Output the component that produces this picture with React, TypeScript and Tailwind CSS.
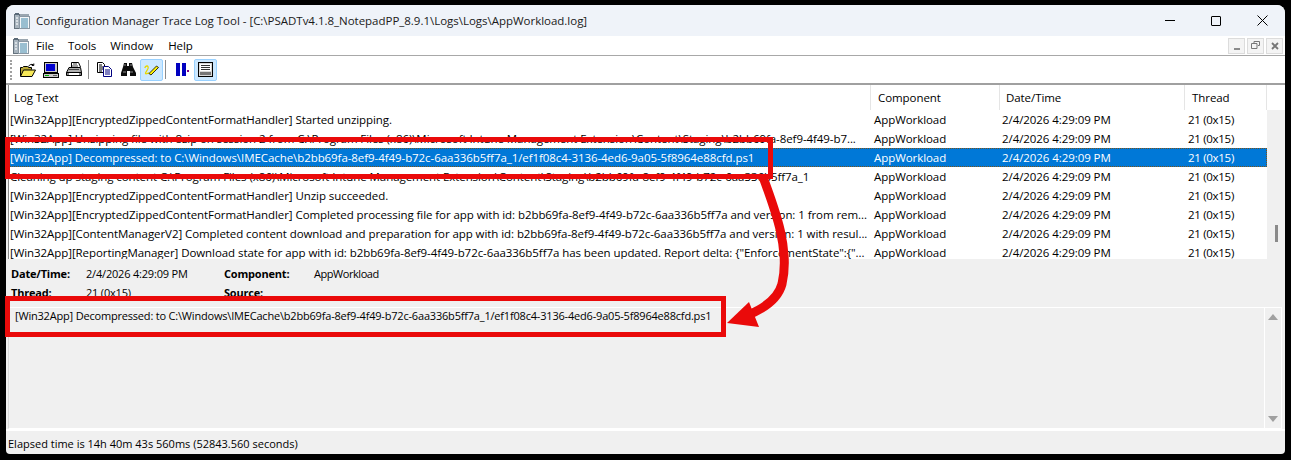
const rows = [
  "[Win32App][EncryptedZippedContentFormatHandler] Started unzipping.",
  "[Win32App] Unzipping file with 8zip on session 2 from C:\\Program Files (x86)\\Microsoft Intune Management Extension\\Content\\Staging\\b2bb69fa-8ef9-4f49-b7...",
  "[Win32App] Decompressed: to C:\\Windows\\IMECache\\b2bb69fa-8ef9-4f49-b72c-6aa336b5ff7a_1/ef1f08c4-3136-4ed6-9a05-5f8964e88cfd.ps1",
  "Cleaning up staging content C:\\Program Files (x86)\\Microsoft Intune Management Extension\\Content\\Staging\\b2bb69fa-8ef9-4f49-b72c-6aa336b5ff7a_1",
  "[Win32App][EncryptedZippedContentFormatHandler] Unzip succeeded.",
  "[Win32App][EncryptedZippedContentFormatHandler] Completed processing file for app with id: b2bb69fa-8ef9-4f49-b72c-6aa336b5ff7a and version: 1 from rem...",
  "[Win32App][ContentManagerV2] Completed content download and preparation for app with id: b2bb69fa-8ef9-4f49-b72c-6aa336b5ff7a and version: 1 with resul...",
  "[Win32App][ReportingManager] Download state for app with id: b2bb69fa-8ef9-4f49-b72c-6aa336b5ff7a has been updated. Report delta: {\"EnforcementState\":{\"...",
];

function AppIcon() {
  return (
    <svg width="16" height="16" viewBox="0 0 16 16">
      <rect x="0.500" y="1.500" width="5" height="14" fill="#a8b4be" stroke="#66737e" />
      <rect x="1" y="0" width="4" height="2" fill="#5a6a78" />
      <rect x="5.500" y="3.500" width="10" height="12" fill="#f4f7f9" stroke="#8a98a4" />
      <rect x="6" y="1" width="9" height="2" fill="#9aa6b0" />
      <path d="M7 6h7M7 8h7M7 10h7M7 12h7M7 14h7" stroke="#3f86a8" />
      <path d="M2 5h2M2 8h2M2 11h2" stroke="#e8edf1" strokeWidth="1.500" />
    </svg>
  );
}

function ToolIcon({ name }: { name: string }) {
  if (name === "open")
    return (
      <svg width="16" height="14" viewBox="0 0 16 14">
        <path d="M.5 13V4.500h2l1-1h4l1 1h3v2" fill="#b8a838" stroke="#000" />
        <path d="M.5 13.500 3.500 7h12l-3.500 6.500z" fill="#f6e858" stroke="#000" />
        <path d="M8.500 3.500C9.500 1.500 11.500.800 13.500 1.800M13.800.500v2h-2" fill="none" stroke="#000" />
      </svg>
    );
  if (name === "computer")
    return (
      <svg width="16" height="16" viewBox="0 0 16 16">
        <rect x="1.500" y="0.500" width="13" height="10" fill="#c8c8c8" stroke="#000" />
        <rect x="3" y="2" width="9" height="7" fill="#0000d0" />
        <rect x="0.500" y="11.500" width="15" height="4" fill="#c8c8c8" stroke="#000" />
        <rect x="2" y="13" width="4" height="1" fill="#00b000" />
        <rect x="10" y="13" width="4" height="1" fill="#606060" />
      </svg>
    );
  if (name === "print")
    return (
      <svg width="16" height="15" viewBox="0 0 16 15">
        <path d="M5.500 5V.500h7l2 4.500" fill="#fff" stroke="#000" />
        <path d="M3 5.500h11.500l1 5h-15z" fill="#b0b0b0" stroke="#000" />
        <path d="M.5 10.500h15v3h-15z" fill="#808080" stroke="#000" />
        <rect x="3" y="11" width="10" height="2" fill="#fff" />
        <path d="M7 2h4M6 4h6M3 7.500h10" stroke="#444" />
      </svg>
    );
  if (name === "copy")
    return (
      <svg width="15" height="15" viewBox="0 0 15 15">
        <path d="M.5.500h5l2 2v8h-7z" fill="#fff" stroke="#000" />
        <path d="M2 3h3M2 5h4M2 7h4M2 9h3" stroke="#000" />
        <path d="M6.500 4.500h5l3 3v7h-8z" fill="#fff" stroke="#000080" />
        <path d="M8 8h5M8 10h5M8 12h5" stroke="#000080" />
      </svg>
    );
  if (name === "find")
    return (
      <svg width="16" height="15" viewBox="0 0 16 15">
        <path d="M4 1h3v3h2V1h3l1 4 3 6v3h-6V9H7v5H1v-3l2-6z" fill="#0c0c0c" />
        <path d="M3 10h3M10 10h3" stroke="#8a8a8a" />
        <path d="M5 2v2M11 2v2" stroke="#8a8a8a" />
      </svg>
    );
  if (name === "highlight")
    return (
      <svg width="15" height="14" viewBox="0 0 15 14">
        <path d="M.8 5C1.500 2 5 2.500 4 5.500 3 8 1 9.500 1.500 10.500 2 11.500 4 10 5 10" fill="none" stroke="#e8d800" strokeWidth="1.300" />
        <path d="M5 10.500 12.500 3l2 1.500-7.500 7.500z" fill="#fff000" stroke="#000" strokeWidth="0.800" />
      </svg>
    );
  if (name === "pause")
    return (
      <svg width="14" height="13" viewBox="0 0 14 13">
        <rect x="0" y="0" width="4" height="13" fill="#0000c0" />
        <rect x="6" y="0" width="4" height="13" fill="#0000c0" />
        <rect x="11" y="7" width="2" height="2" fill="#800080" />
      </svg>
    );
  return (
    <svg width="15" height="15" viewBox="0 0 15 15">
      <rect x="0.500" y="0.500" width="14" height="14" fill="#d8d8d8" stroke="#000" />
      <rect x="2" y="2" width="11" height="7" fill="#fff" />
      <path d="M3 3.500h9M3 5.500h9M3 7.500h9" stroke="#333" />
      <rect x="2" y="10" width="11" height="3" fill="#777" />
    </svg>
  );
}

function ToolButton({ name, active }: { name: string; active?: boolean }) {
  return (
    <div className={`flex h-[22px] w-[23px] items-center justify-center rounded-[2px] border ${active ? "border-[#99d1ff] bg-[#cce8ff]" : "border-transparent"}`}>
      <ToolIcon name={name} />
    </div>
  );
}

function Sep({ className }: { className: string }) {
  return <div className={`h-[19px] w-px bg-[#8c8c8c] ${className}`} />;
}

function Mdi({ children }: { children: React.ReactNode }) {
  return (
    <div className="flex h-[16px] w-[17px] items-center justify-center border border-[#dcdcdc] bg-[#f4f4f4]">
      {children}
    </div>
  );
}

export default function App() {
  return (
    <div className="relative h-[460px] w-[1291px] overflow-hidden bg-black p-[5px_6px_6px_6px] text-[11.5px] leading-[16px] text-black [font-family:'Open_Sans','Noto_Sans',sans-serif] tracking-[-0.07px]">
      <div className="flex h-full flex-col overflow-hidden rounded-t-[8px] rounded-b-[4px] bg-[#f0f0f0]">
        {/* title bar */}
        <div className="flex h-[31px] shrink-0 items-center bg-[#eff3f9]">
          <div className="ml-[8px] mr-[6px] flex"><AppIcon /></div>
          <span className="text-[#1a1a1a] tracking-[-0.02px]">Configuration Manager Trace Log Tool - [C:\PSADTv4.1.8_NotepadPP_8.9.1\Logs\Logs\AppWorkload.log]</span>
          <div className="ml-auto flex items-center">
            <div className="flex h-[31px] w-[46px] items-center justify-center">
              <div className="h-px w-[10px] bg-black" />
            </div>
            <div className="flex h-[31px] w-[46px] items-center justify-center">
              <div className="h-[10px] w-[10px] rounded-[1px] border border-black" />
            </div>
            <div className="flex h-[31px] w-[46px] items-center justify-center">
              <svg width="11" height="11" viewBox="0 0 11 11"><path d="M.5.500l10 10M10.500.500l-10 10" stroke="#000" /></svg>
            </div>
          </div>
        </div>

        {/* menu */}
        <div className="flex h-[19px] shrink-0 items-center bg-white">
          <div className="ml-[7px] mr-[7px] flex"><AppIcon /></div>
          <span className="mr-[14px]">File</span>
          <span className="mr-[14px]">Tools</span>
          <span className="mr-[15px]">Window</span>
          <span>Help</span>
          <div className="ml-auto mr-[2px] flex gap-[2px]">
            <Mdi><div className="mt-[6px] h-[2px] w-[6px] bg-[#8a8a8a]" /></Mdi>
            <Mdi>
              <svg width="9" height="9" viewBox="0 0 9 9"><path d="M3 2V.500h5.500v4H7M.500 2.500h5.500v5H.500z" fill="none" stroke="#777" /></svg>
            </Mdi>
            <Mdi>
              <svg width="8" height="8" viewBox="0 0 8 8"><path d="M1 1l6 6M7 1L1 7" stroke="#777" strokeWidth="1.800" /></svg>
            </Mdi>
          </div>
        </div>

        {/* toolbar */}
        <div className="flex h-[28px] shrink-0 items-center border-t border-[#a8a8a8] bg-white pl-[4px]">
          <div className="mr-[4px] h-[20px] w-[2px] border-l-2 border-dotted border-[#a0a0a0]" />
          <ToolButton name="open" />
          <ToolButton name="computer" />
          <ToolButton name="print" />
          <Sep className="ml-[3px] mr-[4px]" />
          <ToolButton name="copy" />
          <ToolButton name="find" />
          <div className="w-px" />
          <ToolButton name="highlight" active />
          <Sep className="ml-[2px] mr-[5px]" />
          <ToolButton name="pause" />
          <ToolButton name="view" active />
        </div>

        {/* log list */}
        <div className="flex shrink-0 border-t-2 border-[#a0a0a0] pl-[2px]">
          <div className="w-px bg-[#8c8c8c]" />
          <div className="w-[1258px] bg-white">
            <div className="grid h-[25px] grid-cols-[862px_129px_185px_82px] items-center">
              <div className="h-full border-r border-[#e5e5e5] pl-[5px] leading-[25px]">Log Text</div>
              <div className="h-full border-r border-[#e5e5e5] pl-[7px] leading-[25px]">Component</div>
              <div className="h-full border-r border-[#e5e5e5] pl-[6px] leading-[25px]">Date/Time</div>
              <div className="h-full border-r border-[#e5e5e5] pl-[7px] leading-[25px]">Thread</div>
            </div>
            <div className="h-[149px] overflow-hidden">
              {rows.map((text, i) => (
                <div
                  key={i}
                  className={`grid h-[19px] grid-cols-[862px_129px_185px_82px] items-center whitespace-nowrap ${i === 2 ? "bg-[#0078d7] text-white outline-1 -outline-offset-1 outline-dotted outline-[#7a5218]" : ""}`}
                >
                  <div className="overflow-hidden pl-px">{text}</div>
                  <div className="pl-[3px]">AppWorkload</div>
                  <div className="pl-[2px]">2/4/2026 4:29:09 PM</div>
                  <div className="pl-[3px] tracking-[-0.3px]">21 (0x15)</div>
                </div>
              ))}
            </div>
          </div>
          <div className="flex flex-1 flex-col">
            <div className="h-[25px] bg-white" />
            <div className="flex flex-1 justify-center bg-[#f0f0f0]">
              <div className="mt-[115px] h-[17px] w-[3px] bg-[#8a8a8a]" />
            </div>
          </div>
        </div>

        {/* details */}
        <div className="flex h-[48px] shrink-0 flex-col overflow-hidden pl-[5px] pt-[5px] text-[11px] tracking-[-0.19px]">
          <div className="flex h-[19px] items-center">
            <span className="w-[75px] font-bold">Date/Time:</span>
            <span className="w-[138px]">2/4/2026 4:29:09 PM</span>
            <span className="w-[90px] font-bold">Component:</span>
            <span className="tracking-[-0.45px]">AppWorkload</span>
          </div>
          <div className="flex h-[19px] items-center">
            <span className="w-[75px] font-bold">Thread:</span>
            <span className="w-[138px]">21 (0x15)</span>
            <span className="w-[90px] font-bold">Source:</span>
          </div>
        </div>

        {/* message box */}
        <div className="ml-[2px] mr-[3px] flex h-[122px] shrink-0 border border-t-white border-l-[#d8d8d8] border-r-white border-b-white bg-[#f0f0f0] text-[11px] tracking-[-0.19px]">
          <div className="flex-1 pl-[6px]">[Win32App] Decompressed: to C:\Windows\IMECache\b2bb69fa-8ef9-4f49-b72c-6aa336b5ff7a_1/ef1f08c4-3136-4ed6-9a05-5f8964e88cfd.ps1</div>
          <div className="flex w-[17px] flex-col items-center justify-between border-l border-white py-[6px]">
            <div className="h-0 w-0 border-x-[5px] border-b-[6px] border-x-transparent border-b-[#a0a0a0]" />
            <div className="h-0 w-0 border-x-[5px] border-t-[6px] border-x-transparent border-t-[#a0a0a0]" />
          </div>
        </div>

        {/* status */}
        <div className="flex flex-1 items-center border-t-2 border-white pl-[2px] pt-[2px] text-[11px] tracking-normal">
          Elapsed time is 14h 40m 43s 560ms (52843.560 seconds)
        </div>
      </div>

      {/* red annotations */}
      <div className="absolute left-[5px] top-[137px] h-[42px] w-[768px] border-[5px] border-[#ea0a0a]" />
      <div className="absolute left-[5px] top-[296px] h-[41px] w-[721px] border-[5px] border-[#ea0a0a]" />
      <svg className="absolute left-0 top-0" width="1291" height="460" viewBox="0 0 1291 460" fill="none">
        <path d="M763 177C776 212 790 250 782 284C778 299 765 308 748 315" stroke="#ea0a0a" strokeWidth="9" />
        <path d="M727 323L749 302L759 327Z" fill="#ea0a0a" />
      </svg>
    </div>
  );
}
